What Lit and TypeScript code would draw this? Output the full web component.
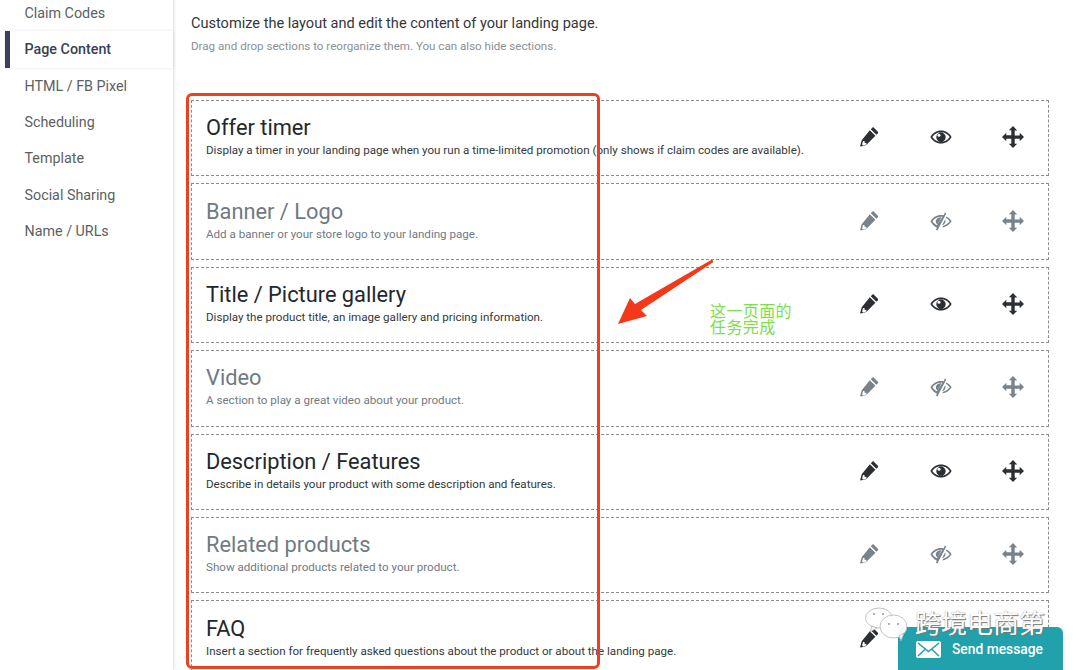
import { LitElement, html, css, svg } from 'lit';
import { customElement } from 'lit/decorators.js';

const NAV = ['Claim Codes', 'Page Content', 'HTML / FB Pixel', 'Scheduling', 'Template', 'Social Sharing', 'Name / URLs'];

const SECTIONS = [
  { title: 'Offer timer', desc: 'Display a timer in your landing page when you run a time-limited promotion (only shows if claim codes are available).', off: false },
  { title: 'Banner / Logo', desc: 'Add a banner or your store logo to your landing page.', off: true },
  { title: 'Title / Picture gallery', desc: 'Display the product title, an image gallery and pricing information.', off: false },
  { title: 'Video', desc: 'A section to play a great video about your product.', off: true },
  { title: 'Description / Features', desc: 'Describe in details your product with some description and features.', off: false },
  { title: 'Related products', desc: 'Show additional products related to your product.', off: true },
  { title: 'FAQ', desc: 'Insert a section for frequently asked questions about the product or about the landing page.', off: false },
];

const pencil = svg`<path fill-rule="evenodd" d="M14.600 1.200l4.200 4.200c.5.5.5 1.200 0 1.700l-1.600 1.600-5.900-5.900 1.600-1.600c.5-.5 1.200-.5 1.700 0zM10.300 3.800l5.900 5.900L6.600 19.300 1 20.900c-.5.1-.9-.3-.8-.8l1.600-5.700zM3.200 15.200l-1 3.600 1 1 3.600-1-.1-1.600-1.900-.1-.1-1.900z"/>`;
const eye = svg`<path fill-rule="evenodd" d="M11 3.500c4.600 0 8.400 2.600 10.600 6.500-2.200 3.900-6 6.500-10.600 6.500S2.600 13.900.4 10C2.600 6.100 6.400 3.500 11 3.500zM11 5.200c-3.600 0-6.800 1.900-8.700 4.800 1.900 2.900 5.100 4.800 8.700 4.800s6.800-1.900 8.700-4.800c-1.900-2.900-5.100-4.800-8.700-4.800zM11 5.600a4.700 4.700 0 1 1 0 9.400 4.700 4.700 0 0 1 0-9.400z"/><circle cx="9" cy="8.300" r="1.500" fill="#fff"/>`;
const eyeOff = svg`<path fill-rule="evenodd" d="M14.800 1.500l1.500.9-8.900 17.200-1.500-.9 1-1.900C4 15.500 1.900 13.100.4 10.300 2.600 6.600 6.400 4 11 4c1 0 1.900.1 2.800.3zM11 5.700c-3.600 0-6.700 1.900-8.600 4.600 1.100 1.700 2.700 3.100 4.500 3.900L12.500 5.800c-.5-.1-1-.1-1.500-.1zM16.500 5.600c2.100 1.100 3.900 2.800 5.100 4.700-2 3.400-5.400 5.800-9.400 6.200l1-1.800c2.700-.5 5-2.200 6.500-4.400-1-1.500-2.300-2.700-3.900-3.500z"/><path d="M11.500 6.200L7.600 13.600C6.300 12.700 5.600 11.200 5.800 9.700c.3-2.100 3-3.800 5.700-3.500z"/><path d="M15.200 8.300c.6 1.500.3 3.200-.7 4.400-.7.800-1.600 1.300-2.500 1.500z"/>`;
const move = svg`<path d="M11 0l4.200 4.400h-2.500v5h5V6.800L22 11l-4.300 4.200v-2.500h-5v5h2.500L11 22l-4.200-4.300h2.500v-5h-5v2.500L0 11l4.300-4.200v2.500h5v-5H6.800z"/>`;

@customElement('app-root')
export class AppRoot extends LitElement {
  static styles = css`
    :host {
      display: block;
      position: relative;
      width: 1080px;
      height: 670px;
      overflow: hidden;
      background: #fff;
      font-family: Roboto, "Liberation Sans", sans-serif;
    }

    .page {
      display: flex;
      height: 670px;
    }

    .sidebar {
      flex: none;
      width: 173px;
      margin-top: -5px;
      box-shadow: 1px 0 3px rgba(0, 0, 0, 0.14);
      position: relative;
    }

    .nav-item {
      display: flex;
      align-items: center;
      height: 36.3px;
      margin-left: 5px;
      padding-left: 19.5px;
      font-size: 14.3px;
      color: #5b5f63;
    }

    .nav-item.active {
      padding-left: 14.5px;
      border-left: 5px solid #39415f;
      font-weight: 500;
      color: #3a3f55;
      box-shadow: 0 0 3px rgba(0, 0, 0, 0.1);
      position: relative;
      z-index: 1;
      background: #fff;
    }

    .main {
      flex: 1;
      min-width: 0;
      padding: 14px 31px 0 18px;
    }

    .lead {
      font-size: 14.55px;
      line-height: 19px;
      color: #33373b;
    }

    .sub {
      margin-top: 6px;
      font-size: 11.6px;
      line-height: 14px;
      color: #8b9095;
    }

    .rows {
      display: flex;
      flex-direction: column;
      gap: 7px;
      margin-top: 47px;
    }

    .row {
      flex: none;
      height: 76.4px;
      box-sizing: border-box;
      display: flex;
      align-items: center;
      padding-left: 14px;
      border: 1px dashed #8d8d8d;
      color: #22272c;
    }

    .row.off {
      color: #6f7a83;
    }

    .text {
      flex: 1;
      min-width: 0;
      margin-top: -4px;
    }

    .title {
      font-size: 21.8px;
      line-height: 26px;
    }

    .desc {
      font-size: 11.6px;
      line-height: 14px;
      margin-top: 2px;
      color: #33383d;
      white-space: nowrap;
    }

    .row.off .desc {
      color: #6f7a83;
    }

    .icons {
      flex: none;
      display: flex;
      align-items: center;
      gap: 50px;
      padding-right: 24px;
      margin-top: -2px;
    }

    .icons svg {
      display: block;
      width: 22px;
      height: 22px;
      fill: #2c3034;
    }

    .icons .pen {
      width: 20px;
      margin-left: 2px;
    }

    .row.off .icons svg {
      fill: #78838c;
    }

    .frame {
      position: absolute;
      left: 186px;
      top: 93px;
      width: 414px;
      height: 576px;
      box-sizing: border-box;
      border: 3px solid #ef3f1f;
      border-radius: 6px;
    }

    .arrow {
      position: absolute;
      left: 610px;
      top: 250px;
    }

    .note {
      position: absolute;
      left: 710px;
      top: 302px;
      font-family: "Noto Sans CJK SC", sans-serif;
      font-size: 16px;
      line-height: 16px;
      letter-spacing: 0.4px;
      color: #7be04a;
    }

    .mark {
      position: absolute;
      left: 864px;
      top: 605px;
      display: flex;
      align-items: flex-start;
      gap: 3px;
    }

    .mark-text {
      font-family: "Noto Sans CJK SC", sans-serif;
      font-size: 26px;
      line-height: 34px;
      color: #fff;
      text-shadow: 0 0 1px #888, 1px 1px 1px #777;
    }

    .chat {
      position: absolute;
      left: 898px;
      top: 627px;
      width: 165px;
      height: 50px;
      display: flex;
      align-items: flex-start;
      gap: 11px;
      box-sizing: border-box;
      padding: 14px 0 0 18px;
      background: #21a1ab;
      border-radius: 6px 6px 0 0;
      color: #fff;
      font-size: 13.8px;
      font-weight: 500;
      line-height: 16px;
    }
  `;

  render() {
    return html`
      <div class="page">
        <nav class="sidebar">
          ${NAV.map(n => html`<div class="nav-item ${n === 'Page Content' ? 'active' : ''}">${n}</div>`)}
        </nav>
        <main class="main">
          <div class="lead">Customize the layout and edit the content of your landing page.</div>
          <div class="sub">Drag and drop sections to reorganize them. You can also hide sections.</div>
          <div class="rows">
            ${SECTIONS.map(s => html`
              <div class="row ${s.off ? 'off' : ''}">
                <div class="text">
                  <div class="title">${s.title}</div>
                  <div class="desc">${s.desc}</div>
                </div>
                <div class="icons">
                  <svg class="pen" viewBox="0 0 21 22">${pencil}</svg>
                  <svg viewBox="0 0 22 20">${s.off ? eyeOff : eye}</svg>
                  <svg viewBox="0 0 22 22">${move}</svg>
                </div>
              </div>
            `)}
          </div>
        </main>
      </div>

      <div class="frame"></div>

      <svg class="arrow" width="110" height="80" viewBox="0 0 110 80">
        <path fill="#f4391a" d="M102 9.500l1.500 2.500L31 60l6 6-29 8 12-26 5 6z"/>
      </svg>
      <div class="note">这一页面的<br />任务完成</div>

      <div class="chat">
        <svg width="25" height="17" viewBox="0 0 25 17">
          <rect width="25" height="17" rx="2" fill="#fff"/>
          <path d="M2 2l10.500 8.500L23 2M2 15l7.500-7M23 15l-7.500-7" fill="none" stroke="#21a1ab" stroke-width="1.5"/>
        </svg>
        <span>Send message</span>
      </div>

      <div class="mark">
        <svg width="48" height="42" viewBox="0 0 48 42" fill="rgba(255,255,255,.94)" stroke="#a9a9a9" stroke-width="0.7">
          <ellipse cx="15" cy="13" rx="13.500" ry="10"/>
          <path d="M8 21l-2 6 7-4z"/>
          <ellipse cx="29.500" cy="21.500" rx="13.500" ry="11.500"/>
          <path d="M35 31l2 5 3-8z"/>
          <circle cx="10" cy="9" r="1" fill="#999" stroke="none"/>
          <circle cx="19" cy="9" r="1" fill="#999" stroke="none"/>
          <circle cx="25" cy="19" r="1" fill="#999" stroke="none"/>
          <circle cx="34" cy="19" r="1" fill="#999" stroke="none"/>
        </svg>
        <span class="mark-text">跨境电商第</span>
      </div>
    `;
  }
}
